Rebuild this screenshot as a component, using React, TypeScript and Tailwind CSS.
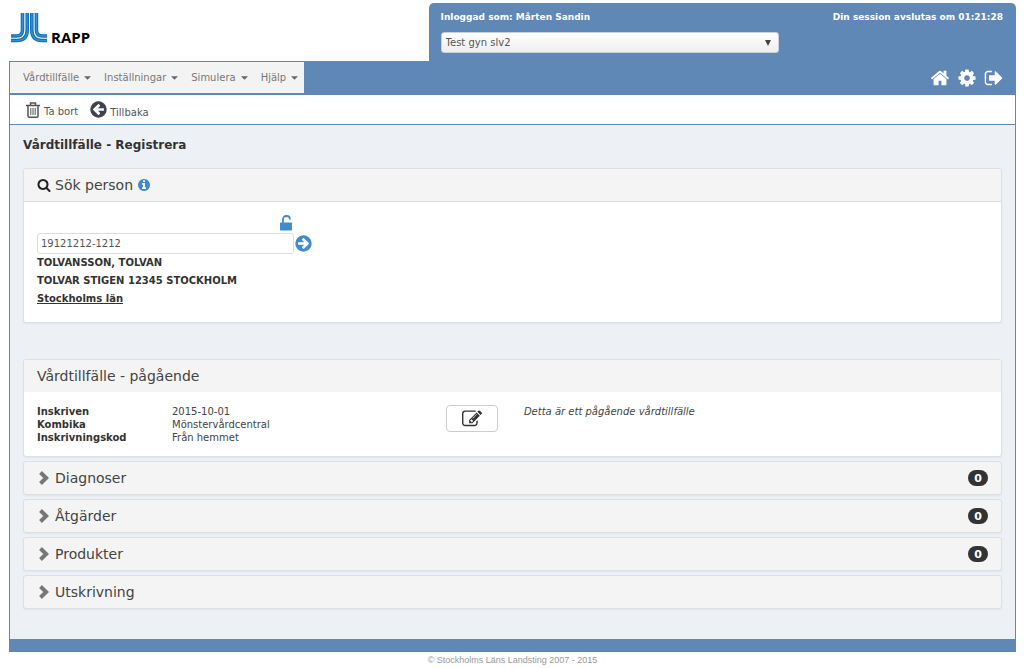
import type { ReactNode } from "react";

const ICONS = {
  home: "M1472 992v480q0 26-19 45t-45 19h-384v-384h-256v384h-384q-26 0-45-19t-19-45v-480q0-1 .5-3t.5-3l575-474 575 474q1 2 1 6zm223-69l-62 74q-8 9-21 11h-3q-13 0-21-7l-692-577-692 577q-12 8-24 7-13-2-21-11l-62-74q-8-10-7-23.5t11-21.5l719-599q32-26 76-26t76 26l244 204v-195q0-14 9-23t23-9h192q14 0 23 9t9 23v408l219 182q10 8 11 21.5t-7 23.5z",
  cog: "M1152 896q0-106-75-181t-181-75-181 75-75 181 75 181 181 75 181-75 75-181zm512-109v222q0 12-8 23t-20 13l-185 28q-19 54-39 91 35 50 107 138 10 12 10 25t-9 23q-27 37-99 108t-94 71q-12 0-26-9l-138-108q-44 23-91 38-16 136-29 186-7 28-36 28h-222q-14 0-24.5-8.5t-11.5-21.5l-28-184q-49-16-90-37l-141 107q-10 9-25 9-14 0-25-11-126-114-165-168-7-10-7-23 0-12 8-23 15-21 51-66.5t54-70.5q-27-50-41-99l-183-27q-13-2-21-12.5t-8-23.5v-222q0-12 8-23t19-13l186-28q14-46 39-92-40-57-107-138-10-12-10-24 0-10 9-23 26-36 98.5-107.5t94.5-71.5q13 0 26 10l138 107q44-23 91-38 16-136 29-186 7-28 36-28h222q14 0 24.5 8.5t11.5 21.5l28 184q49 16 90 37l142-107q9-9 24-9 13 0 25 10 129 119 165 170 7 8 7 22 0 12-8 23-15 21-51 66.5t-54 70.5q26 50 41 98l183 28q13 2 21 12.5t8 23.5z",
  signOut:
    "M704 1440q0 4 1 20t.5 26.5-3 23.5-10 19.5-20.5 6.5h-320q-119 0-203.5-84.5t-84.5-203.5v-704q0-119 84.5-203.5t203.5-84.5h320q13 0 22.5 9.5t9.5 22.5q0 4 1 20t.5 26.5-3 23.5-10 19.5-20.5 6.5h-320q-66 0-113 47t-47 113v704q0 66 47 113t113 47h312l11.5 1 11.5 3 8 5.5 7 9 2 13.5zm928-544q0 26-19 45l-544 544q-19 19-45 19t-45-19-19-45v-288h-448q-26 0-45-19t-19-45v-384q0-26 19-45t45-19h448v-288q0-26 19-45t45-19 45 19l544 544q19 19 19 45z",
  search:
    "M1216 832q0-185-131.5-316.5t-316.5-131.5-316.5 131.5-131.5 316.5 131.5 316.5 316.5 131.5 316.5-131.5 131.5-316.5zm512 832q0 52-38 90t-90 38q-54 0-90-38l-343-342q-179 124-399 124-143 0-273.5-55.5t-225-150-150-225-55.5-273.5 55.5-273.5 150-225 225-150 273.5-55.5 273.5 55.5 225 150 150 225 55.5 273.5q0 220-124 399l343 343q37 37 37 90z",
  info: "M1152 1376v-160q0-14-9-23t-23-9h-96v-512q0-14-9-23t-23-9h-320q-14 0-23 9t-9 23v160q0 14 9 23t23 9h96v320h-96q-14 0-23 9t-9 23v160q0 14 9 23t23 9h448q14 0 23-9t9-23zm-128-896v-160q0-14-9-23t-23-9h-192q-14 0-23 9t-9 23v160q0 14 9 23t23 9h192q14 0 23-9t9-23zm640 416q0 209-103 385.5t-279.5 279.5-385.5 103-385.5-103-279.5-279.5-103-385.5 103-385.5 279.5-279.5 385.5-103 385.5 103 279.5 279.5 103 385.5z",
  arrow:
    "M1413 896q0-27-18-45l-91-91-362-362q-18-18-45-18t-45 18l-91 91q-18 18-18 45t18 45l189 189h-502q-26 0-45 19t-19 45v128q0 26 19 45t45 19h502l-189 189q-19 19-19 45t19 45l91 91q18 18 45 18t45-18l362-362 91-91q18-18 18-45zm251 0q0 209-103 385.5t-279.5 279.5-385.5 103-385.5-103-279.5-279.5-103-385.5 103-385.5 279.5-279.5 385.5-103 385.5 103 279.5 279.5 103 385.5z",
  edit: "M888 1184l116-116-152-152-116 116v56h96v96h56zm440-720q-16-16-33 1l-350 350q-17 17-1 33t33-1l350-350q17-17 1-33zm80 594v190q0 119-84.5 203.5t-203.5 84.5h-832q-119 0-203.5-84.5t-84.5-203.5v-832q0-119 84.5-203.5t203.5-84.5h832q63 0 117 25 15 7 18 23 3 17-9 29l-49 49q-14 14-32 8-23-6-45-6h-832q-66 0-113 47t-47 113v832q0 66 47 113t113 47h832q66 0 113-47t47-113v-126q0-13 9-22l64-64q15-15 35-7t20 29zm-96-738l288 288-672 672h-288v-288zm444 132l-92 92-288-288 92-92q28-28 68-28t68 28l152 152q28 28 28 68t-28 68z",
};

const MENU = ["Vårdtillfälle", "Inställningar", "Simulera", "Hjälp"];

const SECTIONS = [
  { title: "Diagnoser", count: "0" },
  { title: "Åtgärder", count: "0" },
  { title: "Produkter", count: "0" },
  { title: "Utskrivning" },
];

const DETAILS = [
  ["Inskriven", "2015-10-01"],
  ["Kombika", "Mönstervårdcentral"],
  ["Inskrivningskod", "Från hemmet"],
];

function Icon({ name, className }: { name: keyof typeof ICONS; className: string }) {
  return (
    <svg viewBox="0 0 1792 1792" fill="currentColor" className={className} aria-hidden="true">
      <path d={ICONS[name]} />
    </svg>
  );
}

function Logo() {
  const lines = "M11.5 0v17q0 6-6 6H0M16.200 0v17q0 10.500-10.500 10.500H0M20.800 0v17q0 10.500 10.500 10.500H36M25.400 0v17q0 6 6 6H36";
  return (
    <svg viewBox="0 0 36 30" className="h-[30px] w-9" fill="none" aria-hidden="true">
      <path d={lines} stroke="#1672b8" strokeWidth="3.6" />
      <path d={lines} stroke="#2f93d6" strokeWidth="1.2" />
    </svg>
  );
}

function TrashIcon() {
  return (
    <svg viewBox="0 0 14 16" className="h-4 w-3.5" fill="none" stroke="currentColor" aria-hidden="true">
      <path d="M0 3.500h14M4.500 3.500V1h5v2.500M2 3.500V14q0 1.300 1.300 1.300h7.400Q12 15.300 12 14V3.500" strokeWidth="1.5" />
      <path d="M4.800 6v7M7 6v7M9.200 6v7" />
    </svg>
  );
}

function Panel({ heading, children }: { heading: ReactNode; children: ReactNode }) {
  return (
    <section className="overflow-hidden rounded-[3px] border border-[#dcdfe3] bg-white shadow-xs">
      <h2 className="flex h-8 items-center gap-1 bg-[#f4f4f4] px-[13px] text-[14px] text-[#444]">{heading}</h2>
      {children}
    </section>
  );
}

export default function App() {
  return (
    <div className="bg-white pt-[3px] pr-2 pl-[9px] font-['DejaVu_Sans',sans-serif] text-[10px] leading-[13px] text-[#444]">
      <header>
        <div className="flex h-[58px]">
          <div className="flex w-5/12 items-start gap-1 pt-[10px] pl-0.5">
            <Logo />
            <span className="pt-[18px] font-['Open_Sans',sans-serif] text-[15px] font-bold text-black">RAPP</span>
          </div>
          <div className="flex w-7/12 items-start justify-between rounded-t-[5px] bg-[#6088b6] pt-2 pr-[13px] pl-3 text-[9px] font-bold text-white">
            <div>
              <label htmlFor="unit">Inloggad som: Mårten Sandin</label>
              <div className="relative mt-2 w-[338px]">
                <select
                  id="unit"
                  className="block h-[21px] w-full appearance-none rounded-[3px] border border-[#c8d0da] bg-linear-to-b from-white to-[#eee] px-1 text-[10px] font-normal text-[#555]"
                >
                  <option>Test gyn slv2</option>
                </select>
                <svg viewBox="0 0 6 6" className="pointer-events-none absolute top-2 right-2 size-1.5" fill="#444">
                  <path d="M0 0h6L3 6z" />
                </svg>
              </div>
            </div>
            <span>Din session avslutas om 01:21:28</span>
          </div>
        </div>
        <nav className="flex h-[34px] items-stretch justify-between border-x border-t border-b-2 border-[#6088b6] bg-[#6088b6]">
          <div className="flex items-center gap-[13px] bg-[#f3f3f3] pr-1.5 pl-[13px]">
            {MENU.map((item) => (
              <button key={item} type="button" className="flex items-center gap-[5px] text-[#777]">
                {item}
                <svg viewBox="0 0 8 4" className="h-1 w-[7px]" fill="#666">
                  <path d="M0 0h8L4 4z" />
                </svg>
              </button>
            ))}
          </div>
          <div className="flex items-center gap-[7px] pr-[11px] text-white">
            <button type="button" aria-label="Hem">
              <Icon name="home" className="size-5" />
            </button>
            <button type="button" aria-label="Inställningar">
              <Icon name="cog" className="size-5" />
            </button>
            <button type="button" aria-label="Logga ut">
              <Icon name="signOut" className="size-5" />
            </button>
          </div>
        </nav>
      </header>

      <main className="border-x border-[#6088b6] bg-[#edf1f6]">
        <div className="flex h-[30px] items-center gap-[11px] border-b border-[#6088b6] bg-white pl-4 text-[#555]">
          <button type="button" className="flex items-end gap-1">
            <TrashIcon />
            Ta bort
          </button>
          <button type="button" className="flex items-end gap-0.5">
            <Icon name="arrow" className="size-[19px] rotate-180 text-[#3d444c]" />
            Tillbaka
          </button>
        </div>

        <div className="px-[13px] pt-3 pb-[30px]">
          <h1 className="text-[12px] leading-4 font-bold text-[#333]">Vårdtillfälle - Registrera</h1>

          <div className="mt-[15px]">
            <Panel
              heading={
                <>
                  <Icon name="search" className="size-3.5 text-[#222]" />
                  Sök person
                  <Icon name="info" className="size-3.5 text-[#428bca]" />
                </>
              }
            >
              <div className="border-t border-[#ddd] px-[13px] pt-3 pb-3.5 font-bold text-[#333]">
                <div className="flex w-64 justify-end">
                  <svg viewBox="0 0 14 17" className="h-[17px] w-3.5" aria-hidden="true">
                    <path d="M4 9V5.500Q4 2 7.500 2 11 2 11 5.500" fill="none" stroke="#428bca" strokeWidth="1.8" />
                    <rect x="1" y="8.500" width="12" height="8" rx="0.8" fill="#428bca" />
                  </svg>
                </div>
                <div className="mt-0.5 flex items-center">
                  <input
                    aria-label="Personnummer"
                    defaultValue="19121212-1212"
                    className="h-[21px] w-[257px] rounded-[3px] border border-[#ddd] px-[3px] font-normal text-[#555]"
                  />
                  <button type="button" aria-label="Sök">
                    <Icon name="arrow" className="size-[19px] text-[#428bca]" />
                  </button>
                </div>
                <p className="leading-[18px]">TOLVANSSON, TOLVAN</p>
                <p className="leading-[18px]">TOLVAR STIGEN 12345 STOCKHOLM</p>
                <a href="#lan" className="block leading-[18px] underline">
                  Stockholms län
                </a>
              </div>
            </Panel>
          </div>

          <div className="mt-9 flex flex-col gap-1">
            <Panel heading="Vårdtillfälle - pågående">
              <div className="flex items-start px-[13px] pt-[13px] pb-3">
                <dl className="w-[43%]">
                  {DETAILS.map(([term, value]) => (
                    <div key={term} className="flex">
                      <dt className="w-[135px] font-bold text-[#333]">{term}</dt>
                      <dd>{value}</dd>
                    </div>
                  ))}
                </dl>
                <button
                  type="button"
                  aria-label="Redigera"
                  className="flex h-[27px] w-[52px] items-center justify-center rounded-[4px] border border-[#ccc] bg-white text-[#333]"
                >
                  <Icon name="edit" className="size-5" />
                </button>
                <p className="ml-[26px] italic">Detta är ett pågående vårdtillfälle</p>
              </div>
            </Panel>
            {SECTIONS.map((section) => (
              <button
                key={section.title}
                type="button"
                className="flex h-[34px] items-center rounded-[3px] border border-[#dcdfe3] bg-[#f4f4f4] px-[13px] text-[14px] text-[#444] shadow-xs"
              >
                <svg viewBox="0 0 10 14" className="mr-1.5 ml-0.5 h-3.5 w-2.5" fill="none" stroke="#777" strokeWidth="4">
                  <path d="M1.500 1.500L7.200 7l-5.700 5.500" />
                </svg>
                {section.title}
                {section.count && (
                  <span className="ml-auto flex h-4 w-5 items-center justify-center rounded-full bg-[#333] text-[11px] font-bold text-white">
                    {section.count}
                  </span>
                )}
              </button>
            ))}
          </div>
        </div>
      </main>

      <footer className="border-t-[13px] border-[#6088b6] pt-0.5 text-center font-['Liberation_Sans',sans-serif] text-[9px] text-[#999]">
        © Stockholms Läns Landsting 2007 - 2015
      </footer>
    </div>
  );
}
